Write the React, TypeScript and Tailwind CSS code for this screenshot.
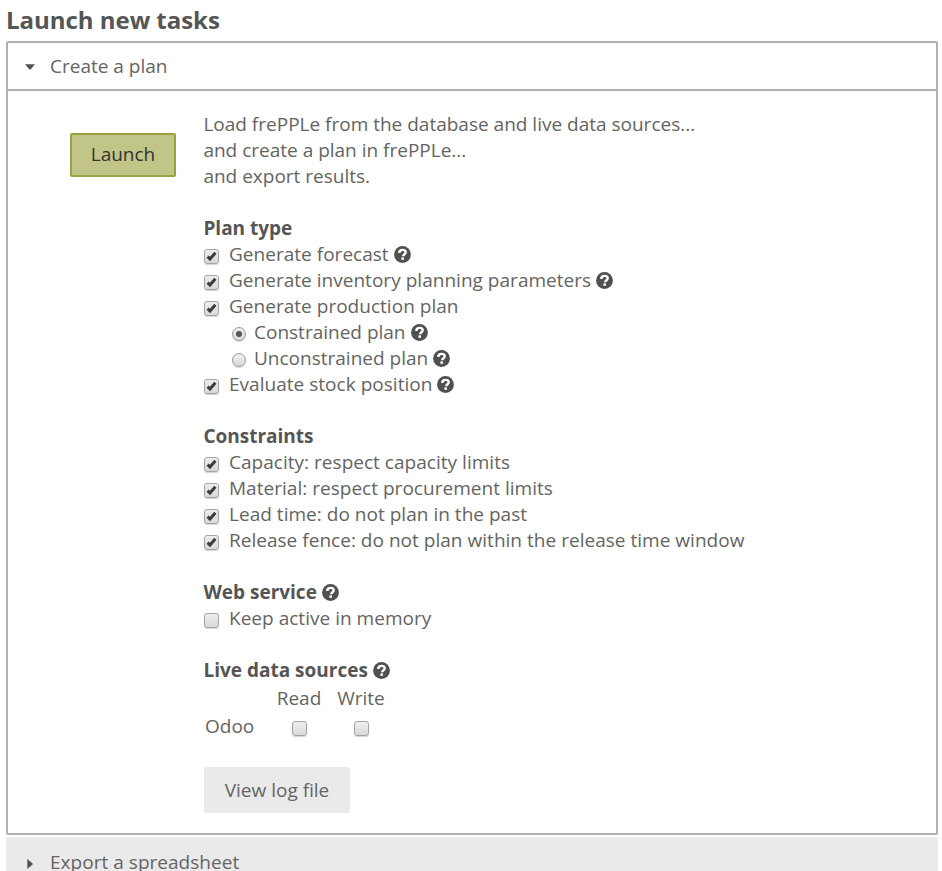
import React from "react";

function Help() {
  return (
    <svg viewBox="0 0 17 17" className="ml-[5px] h-[17px] w-[17px] shrink-0">
      <circle cx="8.5" cy="8.5" r="8.4" fill="#505050" />
      <path d="M5.3 6.9C5.3 4.7 6.6 3.9 8.6 3.9s3.1 0.9 3.1 2.4c0 2-2.5 1.9-2.5 3.9" fill="none" stroke="#fff" strokeWidth="2.4" />
      <rect x="7.4" y="11.4" width="2.6" height="2.4" fill="#fff" />
    </svg>
  );
}

function Check({ on = false }: { on?: boolean }) {
  return (
    <span
      role="checkbox"
      aria-checked={on}
      className="relative top-[2px] block h-[15px] w-[15px] shrink-0 rounded-[3px] border border-[#a4a4a4] bg-linear-to-b from-[#eeeeee] to-[#d9d9d9] shadow-[0_1px_1px_#d4d4d4]"
    >
      {on && (
        <svg viewBox="0 0 13 13" className="block h-[13px] w-[13px]">
          <path d="M2.6 6.6L5 9L10.4 2.8" fill="none" stroke="#3c3c3c" strokeWidth="3" />
        </svg>
      )}
    </span>
  );
}

function Radio({ on = false }: { on?: boolean }) {
  return (
    <span
      role="radio"
      aria-checked={on}
      className="relative top-[2px] flex h-[14px] w-[14px] shrink-0 items-center justify-center rounded-full border border-[#9c9c9c] bg-linear-to-b from-[#eeeeee] to-[#d9d9d9] shadow-[0_1px_1px_#d4d4d4]"
    >
      {on && <span className="h-[6px] w-[6px] rounded-full bg-[#555555]" />}
    </span>
  );
}

function Option({ text, on = false, help = false }: { text: string; on?: boolean; help?: boolean }) {
  return (
    <div className="flex h-[26px] items-center tracking-[0.025px]">
      <Check on={on} />
      <span className="ml-[10px]">{text}</span>
      {help && <Help />}
    </div>
  );
}

function Heading({ text, help = false }: { text: string; help?: boolean }) {
  return (
    <h2 className="mt-[26px] -ml-[0.6px] flex h-[26px] items-center font-bold text-[#555555]">
      <span>{text}</span>
      {help && <Help />}
    </h2>
  );
}

export default function App() {
  return (
    <main className="h-[871px] w-[942px] overflow-hidden bg-white pl-[6px] font-['Open_Sans',sans-serif] text-[19px] leading-[26px] whitespace-nowrap text-[#646464]">
      <h1 className="h-[41px] pt-[4px] text-[24px] leading-[32px] font-bold tracking-[-0.03px] text-[#555555]">Launch new tasks</h1>

      <section className="h-[794px] w-[932px] rounded-[2px] border-2 border-[#b1b1b1]">
        <header className="flex h-[48px] items-center border-b-2 border-[#b1b1b1] pl-[17px]">
          <svg viewBox="0 0 10 6" className="mt-[2px] h-[6px] w-[10px]">
            <path d="M0 0.2H10L5.6 5.5H4.4Z" fill="#555" />
          </svg>
          <span className="ml-[15px]">Create a plan</span>
        </header>

        <div className="flex pl-[62px]">
          <button className="mt-[42px] h-[44px] w-[106px] shrink-0 rounded-[2px] border-2 border-[#9aa23d] bg-[#c1c588] pb-[2px] text-[#333333]">
            Launch
          </button>
          <div className="ml-[28px] pt-[20px]">
            <div className="-ml-[0.6px]">
              <p>Load frePPLe from the database and live data sources...</p>
              <p>and create a plan in frePPLe...</p>
              <p>and export results.</p>
            </div>

            <Heading text="Plan type" />
            <Option text="Generate forecast" on help />
            <Option text="Generate inventory planning parameters" on help />
            <Option text="Generate production plan" on />
            <div className="flex h-[26px] items-center pl-[28px]">
              <Radio on />
              <span className="ml-[8px]">Constrained plan</span>
              <Help />
            </div>
            <div className="flex h-[26px] items-center pl-[28px]">
              <Radio />
              <span className="ml-[8px]">Unconstrained plan</span>
              <Help />
            </div>
            <Option text="Evaluate stock position" on help />

            <Heading text="Constraints" />
            <Option text="Capacity: respect capacity limits" on />
            <Option text="Material: respect procurement limits" on />
            <Option text="Lead time: do not plan in the past" on />
            <Option text="Release fence: do not plan within the release time window" on />

            <Heading text="Web service" help />
            <Option text="Keep active in memory" />

            <Heading text="Live data sources" help />
            <div className="mt-[2px] -ml-px grid grid-cols-[65px_62px_62px] grid-rows-[28px_28px] items-start">
              <span />
              <span className="justify-self-center">Read</span>
              <span className="justify-self-center">Write</span>
              <span className="pl-[2px]">Odoo</span>
              <span className="flex h-[26px] items-center justify-self-center"><Check /></span>
              <span className="flex h-[26px] items-center justify-self-center"><Check /></span>
            </div>

            <button className="mt-[26px] h-[46px] w-[146px] rounded-[2px] bg-[#eaeaea]">View log file</button>
          </div>
        </div>
      </section>

      <section className="mt-[2px] flex h-[50px] w-[932px] items-center rounded-[2px] bg-[#eaeaea] pl-[21px]">
        <svg viewBox="0 0 6 10" className="mt-[3px] h-[10px] w-[6px]">
          <path d="M0.3 0V10L5.7 5.6V4.4Z" fill="#555" />
        </svg>
        <span className="ml-[17px] tracking-[0.03px]">Export a spreadsheet</span>
      </section>
    </main>
  );
}
